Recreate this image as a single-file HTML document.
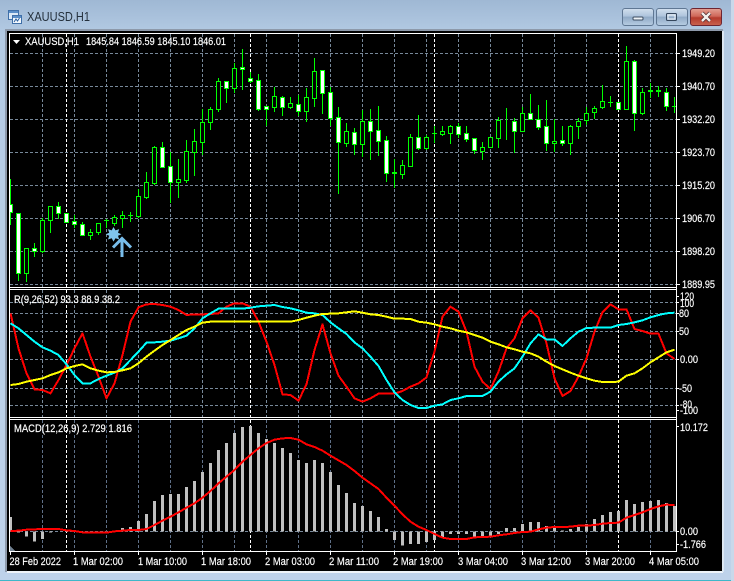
<!DOCTYPE html>
<html><head><meta charset="utf-8"><title>XAUUSD,H1</title>
<style>
html,body{margin:0;padding:0;background:#bcd0e9;width:734px;height:581px;overflow:hidden}
svg{display:block}
text{font-family:"Liberation Sans",sans-serif;font-size:11px;fill:#fff;stroke:#fff;stroke-width:.18px}
</style></head><body>
<svg width="734" height="581" viewBox="0 0 734 581" xmlns="http://www.w3.org/2000/svg">
<defs>
<linearGradient id="bg" x1="0" y1="0" x2="0" y2="1"><stop offset="0" stop-color="#9fb8d4"/><stop offset=".06" stop-color="#b4cbe4"/><stop offset="1" stop-color="#bed2ea"/></linearGradient>
<linearGradient id="btn" x1="0" y1="0" x2="0" y2="1"><stop offset="0" stop-color="#d3e0ee"/><stop offset=".45" stop-color="#aec4dc"/><stop offset=".5" stop-color="#90aac6"/><stop offset="1" stop-color="#b7cde3"/></linearGradient>
<linearGradient id="cls" x1="0" y1="0" x2="0" y2="1"><stop offset="0" stop-color="#e4a295"/><stop offset=".45" stop-color="#d0685a"/><stop offset=".55" stop-color="#b53a2c"/><stop offset="1" stop-color="#c9634f"/></linearGradient>
<clipPath id="c1"><rect x="10" y="34" width="666" height="253"/></clipPath>
<clipPath id="c2"><rect x="10" y="290" width="666" height="127"/></clipPath>
<clipPath id="c3"><rect x="10" y="420" width="666" height="131"/></clipPath>
</defs>
<rect width="734" height="581" fill="url(#bg)"/>
<rect x="0" y="580" width="734" height="1" fill="#3fb7c9"/>
<rect x="731" y="0" width="3" height="581" fill="#c9d8ea"/>
<!-- title -->
<g shape-rendering="crispEdges">
<rect x="8.5" y="10.5" width="10" height="9" fill="#dbe8f6" stroke="#3f6fa8"/><rect x="9" y="11" width="9" height="2" fill="#5b8ec8"/>
<rect x="12.5" y="15.5" width="9" height="8" fill="#f2f7fc" stroke="#3f6fa8"/><rect x="13" y="16" width="8" height="2" fill="#5b8ec8"/>
</g>
<path d="M14 22l2-3 1.5 2 2-3" fill="none" stroke="#2a5f9e"/>
<text x="27" y="21" textLength="63" lengthAdjust="spacingAndGlyphs" style="font-size:12.5px;fill:#24303c;stroke:none">XAUUSD,H1</text>
<!-- buttons -->
<rect x="622.5" y="8.5" width="31" height="17" rx="2.5" fill="url(#btn)" stroke="#5f7793"/>
<rect x="633" y="17" width="10" height="3" rx="1" fill="#eef3f8" stroke="#3c4c60"/>
<rect x="656.5" y="8.5" width="31" height="17" rx="2.5" fill="url(#btn)" stroke="#5f7793"/>
<rect x="666.5" y="13.5" width="10" height="7" rx="1" fill="none" stroke="#34465c" stroke-width="1"/><rect x="668" y="15" width="7" height="4" fill="none" stroke="#eef3f8"/>
<rect x="690.5" y="8.5" width="31" height="17" rx="2.5" fill="url(#cls)" stroke="#6e2530"/>
<path d="M702 13l8 8M710 13l-8 8" stroke="#4e2c30" stroke-width="4"/><path d="M702 13l8 8M710 13l-8 8" stroke="#f3f0ee" stroke-width="2.4"/>
<!-- client -->
<g shape-rendering="crispEdges">
<rect x="5" y="29" width="718" height="543" fill="#8d99aa"/>
<rect x="7" y="31" width="715" height="541" fill="#000"/>
<rect x="7" y="571" width="716" height="2" fill="#eef3f8"/>
<rect x="722" y="31" width="2" height="541" fill="#dce7f2"/>
<!-- grid horizontal -->
<g fill="none" stroke="#778899" stroke-dasharray="3 2">
<path d="M10 53.5H676M10 86.5H676M10 119.5H676M10 152.5H676M10 185.5H676M10 218.5H676M10 251.5H676M10 284.5H676M10 302.5H676M10 313.5H676M10 331.5H676M10 359.5H676M10 388.5H676M10 405.5H676M10 531.5H676"/>
<path d="M42.5 34V287M74.5 34V287M106.5 34V287M138.5 34V287M170.5 34V287M202.5 34V287M234.5 34V287M266.5 34V287M298.5 34V287M330.5 34V287M362.5 34V287M394.5 34V287M426.5 34V287M458.5 34V287M490.5 34V287M522.5 34V287M554.5 34V287M586.5 34V287M650.5 34V287"/>
<path d="M42.5 290V417M74.5 290V417M106.5 290V417M138.5 290V417M170.5 290V417M202.5 290V417M234.5 290V417M266.5 290V417M298.5 290V417M330.5 290V417M362.5 290V417M394.5 290V417M426.5 290V417M458.5 290V417M490.5 290V417M522.5 290V417M554.5 290V417M586.5 290V417M650.5 290V417"/>
<path stroke="#5f7088" d="M42.5 420V551M74.5 420V551M106.5 420V551M138.5 420V551M170.5 420V551M202.5 420V551M234.5 420V551M266.5 420V551M298.5 420V551M330.5 420V551M362.5 420V551M394.5 420V551M426.5 420V551M458.5 420V551M490.5 420V551M522.5 420V551M554.5 420V551M586.5 420V551M650.5 420V551"/>
</g>
<path fill="none" stroke="#fff" stroke-dasharray="3 2" d="M66.5 34V287M250.5 34V287M434.5 34V287M618.5 34V287M66.5 290V417M250.5 290V417M434.5 290V417M618.5 290V417M66.5 420V551M250.5 420V551M434.5 420V551M618.5 420V551"/>
<!-- candles -->
<g clip-path="url(#c1)" fill="none" stroke="#00ff00">
<path d="M10.5 179V225M18.5 213V281M26.5 248V282M34.5 243V257M42.5 218V253M50.5 206V233M58.5 202V219M66.5 213V223M74.5 215V228M82.5 222V236M90.5 229V240M98.5 223V235M106.5 219V228M114.5 215V226M122.5 211V228M130.5 212V222M138.5 189V218M146.5 172V199M154.5 146V185M162.5 142V167M170.5 152V203M178.5 159V198M186.5 140V183M194.5 129V176M202.5 109V155M210.5 107V130M218.5 78V112M226.5 81V103M234.5 63V93M242.5 49V90M250.5 72V83M258.5 74V111M266.5 106V126M274.5 87V112M282.5 96V116M290.5 97V109M298.5 95V116M306.5 88V122M314.5 58V107M322.5 70V114M330.5 87V126M338.5 107V194M346.5 123V147M354.5 128V155M362.5 110V157M370.5 109V160M378.5 106V156M386.5 136V182M394.5 159V188M402.5 160V179M410.5 134V167M418.5 115V150M426.5 135V150M434.5 126V143M442.5 126V136M450.5 125V144M458.5 123V138M466.5 126V142M474.5 138V154M482.5 142V160M490.5 137V147M498.5 117V148M506.5 108V140M514.5 118V153M522.5 107V132M530.5 94V119M538.5 105V130M546.5 100V151M554.5 119V152M562.5 126V146M570.5 125V155M578.5 118V139M586.5 107V125M594.5 106V119M602.5 85V109M610.5 96V107M618.5 102V110M626.5 46V110M634.5 60V131M642.5 88V115M650.5 83V98M658.5 86V97M666.5 88V111M674.5 97V113"/>
<path d="M104 220.5h5M128 215.5h5M392 173.5h5M392 172.5h5M432 133.5h5M608 102.5h5M648 91.5h5M648 90.5h5M656 91.5h5M656 90.5h5M672 106.5h5"/>
<path fill="#000" d="M24.5 248.5h4v25h-4zM40.5 220.5h4v31h-4zM48.5 206.5h4v14h-4zM88.5 232.5h4v3h-4zM96.5 223.5h4v9h-4zM112.5 217.5h4v6h-4zM120.5 215.5h4v3h-4zM136.5 196.5h4v20h-4zM144.5 182.5h4v15h-4zM152.5 147.5h4v36h-4zM176.5 179.5h4v3h-4zM184.5 151.5h4v29h-4zM192.5 141.5h4v11h-4zM200.5 122.5h4v20h-4zM208.5 109.5h4v13h-4zM216.5 81.5h4v28h-4zM232.5 68.5h4v20h-4zM272.5 96.5h4v11h-4zM288.5 103.5h4v4h-4zM304.5 97.5h4v14h-4zM312.5 71.5h4v27h-4zM344.5 131.5h4v12h-4zM360.5 121.5h4v23h-4zM400.5 165.5h4v9h-4zM408.5 137.5h4v29h-4zM424.5 137.5h4v11h-4zM440.5 131.5h4v3h-4zM448.5 126.5h4v7h-4zM480.5 147.5h4v4h-4zM488.5 137.5h4v10h-4zM496.5 120.5h4v18h-4zM520.5 113.5h4v18h-4zM552.5 141.5h4v2h-4zM568.5 126.5h4v17h-4zM576.5 121.5h4v5h-4zM584.5 113.5h4v7h-4zM592.5 108.5h4v4h-4zM600.5 101.5h4v6h-4zM624.5 61.5h4v48h-4zM640.5 92.5h4v21h-4z"/>
<path fill="#fff" d="M8.5 204.5h4v8h-4zM16.5 213.5h4v60h-4zM32.5 248.5h4v3h-4zM56.5 206.5h4v7h-4zM64.5 213.5h4v9h-4zM72.5 221.5h4v3h-4zM80.5 224.5h4v11h-4zM160.5 147.5h4v20h-4zM168.5 166.5h4v16h-4zM224.5 81.5h4v7h-4zM240.5 67.5h4v2h-4zM248.5 78.5h4v3h-4zM256.5 80.5h4v29h-4zM264.5 106.5h4v3h-4zM280.5 97.5h4v10h-4zM296.5 104.5h4v7h-4zM320.5 70.5h4v23h-4zM328.5 92.5h4v26h-4zM336.5 117.5h4v25h-4zM352.5 132.5h4v12h-4zM368.5 121.5h4v10h-4zM376.5 130.5h4v11h-4zM384.5 140.5h4v33h-4zM416.5 137.5h4v11h-4zM456.5 126.5h4v8h-4zM464.5 133.5h4v6h-4zM472.5 138.5h4v12h-4zM512.5 121.5h4v10h-4zM528.5 113.5h4v6h-4zM536.5 119.5h4v8h-4zM544.5 126.5h4v17h-4zM560.5 140.5h4v3h-4zM616.5 102.5h4v7h-4zM632.5 61.5h4v52h-4zM664.5 92.5h4v14h-4z"/>
</g>
<!-- histogram -->
<g clip-path="url(#c3)"><g transform="translate(.5,415) scale(.33333)" fill="none" stroke="#c0c0c0" stroke-width="9">
<path d="M30 349V306M54 349V352M78 349V365M102 349V380M126 349V372M150 349V353M198 349V351M222 349V345M246 349V351M270 349V351M294 349V350M318 349V351M342 349V347M366 349V339M390 349V336M414 349V318M438 349V297M462 349V258M486 349V240M510 349V237M534 349V237M558 349V216M582 349V198M606 349V171M630 349V144M654 349V105M678 349V84M702 349V54M726 349V36M750 349V33M774 349V54M798 349V72M822 349V84M846 349V99M870 349V114M894 349V135M918 349V144M942 349V135M966 349V144M990 349V171M1014 349V210M1038 349V234M1062 349V264M1086 349V273M1110 349V288M1134 349V306M1158 349V342M1182 349V375M1206 349V392M1230 349V387M1254 349V387M1278 349V381M1302 349V375M1326 349V366M1350 349V357M1374 349V357M1398 349V357M1422 349V366M1446 349V363M1470 349V363M1494 349V357M1518 349V339M1542 349V339M1566 349V327M1590 349V321M1614 349V321M1638 349V333M1662 349V339M1686 349V346M1710 349V342M1734 349V336M1758 349V327M1782 349V312M1806 349V300M1830 349V291M1854 349V288M1878 349V255M1902 349V267M1926 349V261M1950 349V258M1974 349V255M1998 349V264M2022 349V273"/>
</g></g>
<path d="M10 546L15 551H10z" fill="#708090"/>
<!-- frame lines -->
<g fill="#fff">
<rect x="9" y="33" width="668" height="1"/><rect x="9" y="287" width="668" height="1"/><rect x="9" y="289" width="668" height="1"/>
<rect x="9" y="417" width="668" height="1"/><rect x="9" y="419" width="668" height="1"/><rect x="9" y="551" width="668" height="1"/>
<rect x="9" y="33" width="1" height="519"/><rect x="676" y="33" width="1" height="519"/>
<path d="M677 53h3v1h-3zM677 86h3v1h-3zM677 119h3v1h-3zM677 152h3v1h-3zM677 185h3v1h-3zM677 218h3v1h-3zM677 251h3v1h-3zM677 284h3v1h-3zM677 296h2v1h-2zM677 302h2v1h-2zM677 313h2v1h-2zM677 331h2v1h-2zM677 359h2v1h-2zM677 388h2v1h-2zM677 405h2v1h-2zM677 410h2v1h-2zM677 426h2v1h-2zM677 531h2v1h-2zM677 544h2v1h-2z"/>
<path d="M10 552h1v3h-1zM74 552h1v3h-1zM138 552h1v3h-1zM202 552h1v3h-1zM266 552h1v3h-1zM330 552h1v3h-1zM394 552h1v3h-1zM458 552h1v3h-1zM522 552h1v3h-1zM586 552h1v3h-1zM650 552h1v3h-1z"/>
</g>
</g>
<!-- indicator lines -->
<g clip-path="url(#c2)" shape-rendering="crispEdges"><g transform="translate(.5,285) scale(.33333)" fill="none" stroke-width="6" stroke-linejoin="round">
<polyline stroke="#ff0000" points="30,85 54,190 78,265 102,313 126,315 150,325 174,285 198,240 222,190 246,145 270,215 294,275 318,340 342,295 366,210 390,110 414,67 438,58 462,57 486,60 510,65 534,75 558,90 582,88 606,88 630,87 654,85 678,65 702,55 726,55 750,65 774,110 798,170 822,240 846,328 870,330 894,347 918,298 942,195 966,118 990,205 1014,272 1038,305 1062,340 1086,350 1110,340 1134,326 1158,326 1182,326 1206,318 1230,305 1254,295 1278,277 1302,200 1326,95 1350,65 1374,80 1398,140 1422,245 1446,290 1470,312 1494,260 1518,190 1542,160 1566,100 1590,76 1614,98 1638,175 1662,280 1686,333 1710,318 1734,275 1758,220 1782,140 1806,82 1830,58 1854,73 1878,73 1902,132 1926,138 1950,146 1974,146 1998,205 2022,222"/>
<polyline stroke="#00ffff" points="30,115 54,130 78,150 102,170 126,187 150,197 174,210 198,238 222,270 246,295 270,295 294,282 318,272 342,263 366,250 390,225 414,200 438,173 462,172 486,170 510,167 534,160 558,152 582,130 606,100 630,85 654,71 678,71 702,71 726,71 750,68 774,64 798,62 822,60 846,66 870,70 894,76 918,83 942,85 966,90 990,112 1014,130 1038,147 1062,172 1086,190 1110,215 1134,243 1158,285 1182,322 1206,345 1230,360 1254,369 1278,369 1302,362 1326,358 1350,345 1374,340 1398,333 1422,333 1446,333 1470,320 1494,290 1518,268 1542,250 1566,215 1590,175 1614,148 1638,163 1662,163 1686,183 1710,160 1734,140 1758,129 1782,128 1806,128 1830,128 1854,120 1878,117 1902,112 1926,106 1950,97 1974,90 1998,85 2022,83"/>
<polyline stroke="#ffff00" points="30,300 54,297 78,290 102,285 126,280 150,270 174,262 198,250 222,243 246,238 270,250 294,257 318,262 342,261 366,256 390,250 414,235 438,215 462,197 486,180 510,165 534,150 558,135 582,125 606,113 630,110 654,110 678,110 702,110 726,110 750,110 774,110 798,110 822,110 846,110 870,110 894,105 918,98 942,92 966,87 990,86 1014,85 1038,82 1062,79 1086,83 1110,88 1134,90 1158,95 1182,101 1206,101 1230,102 1254,110 1278,113 1302,118 1326,125 1350,130 1374,137 1398,142 1422,150 1446,158 1470,170 1494,178 1518,187 1542,193 1566,200 1590,205 1614,215 1638,230 1662,243 1686,253 1710,263 1734,272 1758,280 1782,287 1806,291 1830,291 1854,290 1878,272 1902,265 1926,250 1950,232 1974,217 1998,202 2022,194"/>
</g></g>
<g clip-path="url(#c3)" shape-rendering="crispEdges"><g transform="translate(.5,415) scale(.33333)" fill="none" stroke-width="6" stroke-linejoin="round">
<polyline stroke="#ff0000" points="30,348 54,347 78,344 102,343 126,342 150,342 174,342 198,346 222,348 246,352 270,353 294,353 318,353 342,349 366,347 390,345 414,345 438,342 462,330 486,317 510,305 534,292 558,278 582,265 606,248 630,228 654,205 678,185 702,165 726,140 750,120 774,100 798,84 822,74 846,70 870,69 894,74 918,88 942,96 966,107 990,122 1014,136 1038,150 1062,168 1086,188 1110,205 1134,222 1158,248 1182,272 1206,298 1230,320 1254,335 1278,345 1302,357 1326,368 1350,372 1374,372 1398,372 1422,367 1446,366 1470,365 1494,361 1518,358 1542,354 1566,351 1590,350 1614,343 1638,338 1662,336 1686,336 1710,335 1734,332 1758,332 1782,330 1806,326 1830,324 1854,323 1878,308 1902,300 1926,292 1950,282 1974,274 1998,269 2022,270"/>
</g></g>
<!-- arrow objects -->
<path d="M113.5 227l2 3.4 3.7-1.3-1.2 3.7 3.5 1.5-3.5 1.5 1.2 3.7-3.7-1.3-2 3.4-1.8-3.4-3.7 1.3 1.2-3.7-3.5-1.5 3.5-1.5-1.2-3.7 3.7 1.3z" fill="#7fc4ec"/>
<path d="M122 238V257M113 247.5L122 238.5L131 247.5" fill="none" stroke="#78bdea" stroke-width="3"/>
<!-- labels -->
<path d="M13 40h7l-3.5 4z" fill="#fff"/>
<text x="25" y="45" textLength="54" lengthAdjust="spacingAndGlyphs">XAUUSD,H1</text>
<text x="86" y="45" textLength="140" lengthAdjust="spacingAndGlyphs">1845.84 1846.59 1845.10 1846.01</text>
<text x="14" y="303" textLength="106" lengthAdjust="spacingAndGlyphs">R(9,26,52) 93.3 88.9 38.2</text>
<text x="14" y="432" textLength="118" lengthAdjust="spacingAndGlyphs">MACD(12,26,9) 2.729 1.816</text>
<g>
<text x="682" y="57" textLength="33" lengthAdjust="spacingAndGlyphs">1949.20</text>
<text x="682" y="90" textLength="33" lengthAdjust="spacingAndGlyphs">1940.70</text>
<text x="682" y="123" textLength="33" lengthAdjust="spacingAndGlyphs">1932.20</text>
<text x="682" y="156" textLength="33" lengthAdjust="spacingAndGlyphs">1923.70</text>
<text x="682" y="189" textLength="33" lengthAdjust="spacingAndGlyphs">1915.20</text>
<text x="682" y="222" textLength="33" lengthAdjust="spacingAndGlyphs">1906.70</text>
<text x="682" y="255" textLength="33" lengthAdjust="spacingAndGlyphs">1898.20</text>
<text x="682" y="288" textLength="33" lengthAdjust="spacingAndGlyphs">1889.95</text>
<text x="680" y="300" textLength="14" lengthAdjust="spacingAndGlyphs">120</text>
<text x="680" y="307" textLength="14" lengthAdjust="spacingAndGlyphs">100</text>
<text x="679" y="317" textLength="10" lengthAdjust="spacingAndGlyphs">80</text>
<text x="679" y="335" textLength="10" lengthAdjust="spacingAndGlyphs">50</text>
<text x="680" y="363" textLength="18" lengthAdjust="spacingAndGlyphs">0.00</text>
<text x="679" y="392" textLength="13" lengthAdjust="spacingAndGlyphs">-50</text>
<text x="680" y="408" textLength="12" lengthAdjust="spacingAndGlyphs">-80</text>
<text x="680" y="414" textLength="18" lengthAdjust="spacingAndGlyphs">-100</text>
<text x="680" y="431" textLength="28" lengthAdjust="spacingAndGlyphs">10.172</text>
<text x="680" y="535" textLength="18" lengthAdjust="spacingAndGlyphs">0.00</text>
<text x="680" y="548" textLength="26" lengthAdjust="spacingAndGlyphs">-1.766</text>
</g>
<g>
<text x="9.5" y="565" textLength="51.5" lengthAdjust="spacingAndGlyphs">28 Feb 2022</text>
<text x="73" y="565" textLength="50" lengthAdjust="spacingAndGlyphs">1 Mar 02:00</text>
<text x="138" y="565" textLength="49" lengthAdjust="spacingAndGlyphs">1 Mar 10:00</text>
<text x="201" y="565" textLength="50" lengthAdjust="spacingAndGlyphs">1 Mar 18:00</text>
<text x="265" y="565" textLength="50" lengthAdjust="spacingAndGlyphs">2 Mar 03:00</text>
<text x="329" y="565" textLength="50" lengthAdjust="spacingAndGlyphs">2 Mar 11:00</text>
<text x="393" y="565" textLength="50" lengthAdjust="spacingAndGlyphs">2 Mar 19:00</text>
<text x="458" y="565" textLength="50" lengthAdjust="spacingAndGlyphs">3 Mar 04:00</text>
<text x="521" y="565" textLength="50" lengthAdjust="spacingAndGlyphs">3 Mar 12:00</text>
<text x="585" y="565" textLength="50" lengthAdjust="spacingAndGlyphs">3 Mar 20:00</text>
<text x="649" y="565" textLength="50" lengthAdjust="spacingAndGlyphs">4 Mar 05:00</text>
</g>
</svg>
</body></html>
